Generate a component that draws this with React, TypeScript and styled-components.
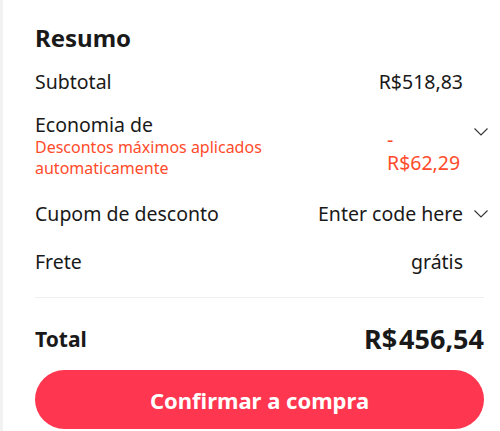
import React from "react";
import styled, { createGlobalStyle } from "styled-components";

const Global = createGlobalStyle`
  html, body { margin: 0; padding: 0; background: #f2f2f2; }
  body { font-family: "Noto Sans", "Open Sans", sans-serif; color: #191919; }
`;

const Page = styled.div`
  display: flex;
  height: 431px;
  padding-left: 3px;
  overflow: hidden;
`;

const Card = styled.section`
  flex: 1;
  background: #fff;
  padding: 20px 16px 0 32px;
  display: flex;
  flex-direction: column;
`;

const Title = styled.h2`
  margin: 0 0 13px;
  font-size: 24px;
  font-weight: 700;
  line-height: 36px;
`;

const Row = styled.div<{ $gap: number }>`
  display: flex;
  align-items: flex-start;
  justify-content: space-between;
  margin-bottom: ${(p) => p.$gap}px;
`;

const Label = styled.div<{ $lh?: number }>`
  font-size: 19.5px;
  line-height: ${(p) => p.$lh ?? 26}px;
`;

const Note = styled.div`
  font-size: 16px;
  line-height: 21px;
  color: #ff4b2b;
`;

const ValueWrap = styled.div<{ $top?: boolean }>`
  display: flex;
  align-items: ${(p) => (p.$top ? "flex-start" : "center")};
  gap: 10px;
  padding-right: 21px;
`;

const Value = styled.div<{ $red?: boolean }>`
  font-size: 19.5px;
  line-height: 26px;
  color: ${(p) => (p.$red ? "#ff4b2b" : "#191919")};
`;

const Discount = styled(Value)`
  width: 76px;
  padding-top: 15px;
  line-height: 23px;
`;

const Chevron = styled.svg<{ $offset?: number }>`
  width: 16px;
  height: 16px;
  margin-right: -26px;
  margin-top: ${(p) => p.$offset ?? 0}px;
  flex: none;
`;

const Divider = styled.hr`
  border: none;
  border-top: 1px solid #efefef;
  margin: 0;
`;

const TotalRow = styled.div`
  display: flex;
  align-items: center;
  justify-content: space-between;
  padding: 22px 0 0;
`;

const TotalLabel = styled.div`
  font-size: 21px;
  font-weight: 700;
`;

const TotalValue = styled.div`
  font-size: 27px;
  font-weight: 700;
  display: flex;
  gap: 2px;
`;

const Button = styled.button`
  margin-top: 13px;
  height: 59px;
  border: none;
  border-radius: 30px;
  background: #fe364f;
  color: #fff;
  font-family: inherit;
  font-size: 22px;
  font-weight: 700;
  cursor: pointer;
`;

const Down = ({ offset }: { offset?: number }) => (
  <Chevron $offset={offset} viewBox="0 0 16 16" fill="none" stroke="#333" strokeWidth="1.1">
    <path d="M1.5 4.5 L8 11 L14.5 4.5" />
  </Chevron>
);

export default function App() {
  return (
    <>
      <Global />
      <Page>
        <Card>
          <Title>Resumo</Title>
          <Row $gap={18}>
            <Label>Subtotal</Label>
            <ValueWrap>
              <Value>R$518,83</Value>
            </ValueWrap>
          </Row>
          <Row $gap={22}>
            <div>
              <Label $lh={24}>Economia de</Label>
              <Note>
                Descontos máximos aplicados
                <br />
                automaticamente
              </Note>
            </div>
            <ValueWrap $top>
              <Discount $red>- R$62,29</Discount>
              <Down offset={11} />
            </ValueWrap>
          </Row>
          <Row $gap={22}>
            <Label>Cupom de desconto</Label>
            <ValueWrap>
              <Value>Enter code here</Value>
              <Down />
            </ValueWrap>
          </Row>
          <Row $gap={22}>
            <Label>Frete</Label>
            <ValueWrap>
              <Value>grátis</Value>
            </ValueWrap>
          </Row>
          <Divider />
          <TotalRow>
            <TotalLabel>Total</TotalLabel>
            <TotalValue>
              <span>R$</span>
              <span>456,54</span>
            </TotalValue>
          </TotalRow>
          <Button>Confirmar a compra</Button>
        </Card>
      </Page>
    </>
  );
}
